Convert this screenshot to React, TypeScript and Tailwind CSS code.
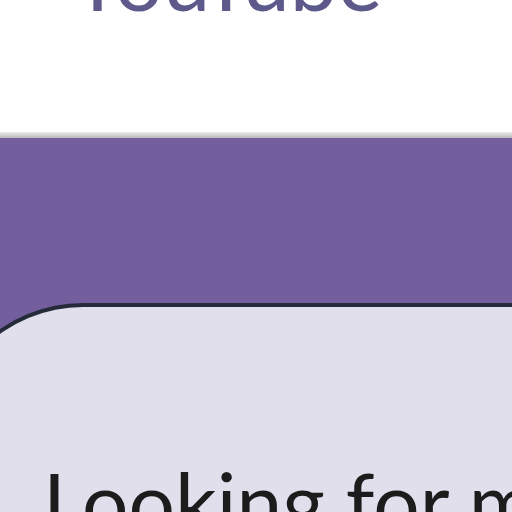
export default function App() {
    return (
        <div className="w-[512px] h-[512px] overflow-hidden bg-white" style={{ fontFamily: 'Lato, "Noto Sans", sans-serif' }}>
            <div className="h-[132px] bg-white flex justify-start">
                <span className="ml-[71px] -mt-[64px] text-[85px] leading-none text-[#5d5a8b] h-[76px] whitespace-nowrap">
                    YouTube
                </span>
            </div>
            <div className="h-[6px] bg-gradient-to-b from-[#ececec] to-[#b9b9b9]" />
            <div className="bg-[#735f9e] pt-[165px]">
                <div className="-ml-[62px] w-[640px] h-[300px] bg-[#e1dfec] border-t-4 border-l-4 border-[#262b3a] rounded-tl-[145px] pt-[152px] pl-[101px]">
                    <p className="text-[82px] leading-none text-[#1c1c1c] whitespace-nowrap">
                        Looking for more
                    </p>
                </div>
            </div>
        </div>
    );
}
